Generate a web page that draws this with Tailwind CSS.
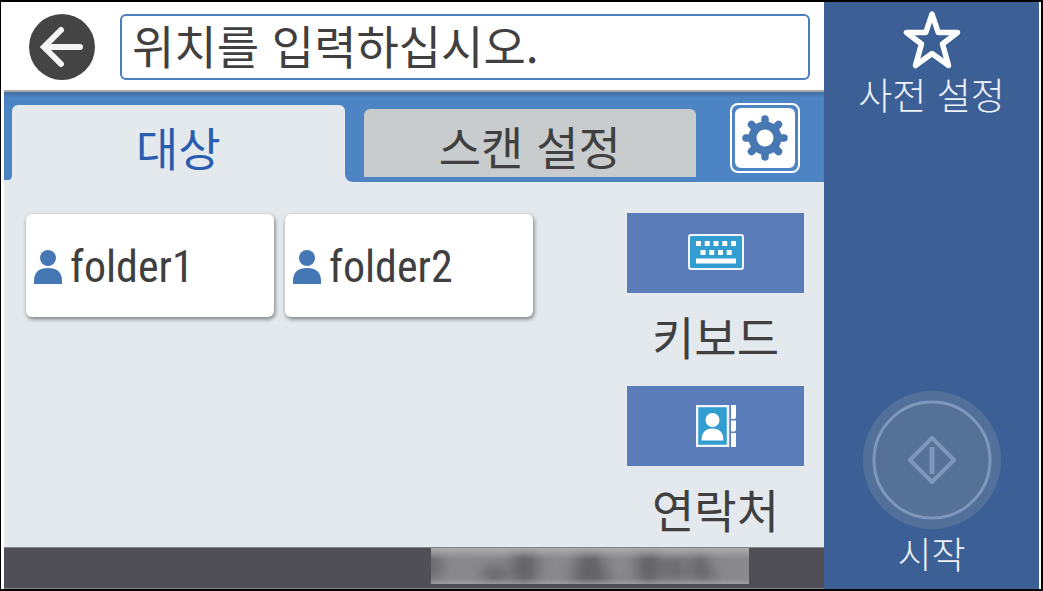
<!DOCTYPE html>
<html lang="ko">
  <head>
    <meta charset="UTF-8" />
    <meta name="viewport" content="width=device-width, initial-scale=1.0" />
    <script src="https://cdn.jsdelivr.net/npm/@tailwindcss/browser@4"></script>
    <title>스캔</title>
  </head>
  <body class="w-full h-screen flex overflow-hidden bg-white border-t-2 border-l border-r-2 border-b-2 border-black pl-[3px] pr-0.5 font-['Noto_Sans_CJK_KR',sans-serif] text-[46px] leading-[56px] text-[#404040]">
    <main class="flex-1 min-w-0 flex flex-col">
      <!-- Location -->
      <header class="flex items-center gap-6 pl-6 pr-3.5 pt-3 pb-2.5 border-b-2 border-[#a9aaa8]">
        <button aria-label="뒤로" class="shrink-0">
          <svg class="w-[68px] h-[66px]" viewBox="0 0 68 66" fill="none">
            <circle cx="34" cy="33" r="33" fill="#444444" />
            <path d="M33 16L16 33l17 17M18 33h34" stroke="#f4f4f4" stroke-width="6" stroke-linecap="round" />
          </svg>
        </button>
        <input type="text" aria-label="위치" value="위치를 입력하십시오." class="flex-1 min-w-0 h-[66px] px-2.5 pb-1.5 bg-white border-2 border-[#4a7ebd] rounded-md" />
      </header>

      <!-- Tabs -->
      <nav class="flex items-start bg-[#4c84c4] shadow-[inset_0_4px_3px_-1px_#446fa3] pl-2 pr-6 h-[90px] shrink-0">
        <div class="relative flex-1 self-end h-[77px]">
          <button class="w-full h-full pt-1 bg-[#e4e9ee] text-[#2a5caf] rounded-t-md">대상</button>
          <!-- rounded feet of the tab -->
          <svg class="absolute right-full bottom-0 w-2 h-2" viewBox="0 0 8 8" fill="#e4e9ee">
            <path d="M0 6h4q4 0 4-5v7H0z" />
          </svg>
          <svg class="absolute left-full bottom-0 w-2 h-2" viewBox="0 0 8 8" fill="#e4e9ee">
            <path d="M0 0q0 7 8 8H0z" />
          </svg>
        </div>
        <button class="flex-1 mt-[17px] ml-[19px] h-[68px] pt-1 bg-[#c9cccc] rounded-t-md">스캔 설정</button>
        <button aria-label="설정" class="mt-[11px] ml-[34px] w-[70px] h-[70px] p-[3px] border-2 border-white rounded-lg shrink-0">
          <span class="flex items-center justify-center w-full h-full bg-white rounded-md">
            <svg class="w-[46px] h-[46px]" viewBox="-23 -23 46 46" stroke="#4878b4">
              <path d="M0-19V19M-19 0H19M-13.5-13.5L13.5 13.5M-13.5 13.5L13.5-13.5" stroke-width="7.5" stroke-linecap="round" />
              <circle r="12.5" fill="white" stroke-width="8" />
            </svg>
          </span>
        </button>
      </nav>

      <!-- Destinations -->
      <section class="flex-1 min-h-0 flex justify-between bg-[#e4e9ee] pt-[31px] pl-[22px] pr-5">
        <div class="flex items-start gap-[11px] pt-px font-['Roboto_Condensed','Liberation_Sans',sans-serif] text-[44px]">
          <button class="flex items-center gap-2 w-[248px] h-[103px] pl-2 pt-0.5 bg-white rounded-md shadow-[1px_2px_4px_#777]">
            <svg class="w-[28px] h-[34px] shrink-0" viewBox="0 0 28 34" fill="#4677b5">
              <circle cx="14" cy="8" r="8" />
              <path d="M0 34v-3C0 22 5 18 14 18s14 4 14 13v3z" />
            </svg>
            folder1
          </button>
          <button class="flex items-center gap-2 w-[248px] h-[103px] pl-2 pt-0.5 bg-white rounded-md shadow-[1px_2px_4px_#777]">
            <svg class="w-[28px] h-[34px] shrink-0" viewBox="0 0 28 34" fill="#4677b5">
              <circle cx="14" cy="8" r="8" />
              <path d="M0 34v-3C0 22 5 18 14 18s14 4 14 13v3z" />
            </svg>
            folder2
          </button>
        </div>

        <div class="flex flex-col gap-2 w-[177px]">
          <button class="flex flex-col items-center">
            <span class="flex items-center justify-center w-full h-20 pb-0.5 bg-[#5a7cb9]">
              <svg class="w-[56px] h-[36px]" viewBox="0 0 56 36">
                <rect x="1" y="1" width="54" height="34" rx="2" fill="#329dd1" stroke="#f2f6fa" stroke-width="2" />
                <path d="M8 9.5h40" stroke="white" stroke-width="5" stroke-dasharray="5 3.75" />
                <path d="M12.5 18.5h31.500" stroke="white" stroke-width="5" stroke-dasharray="5 3.75" />
                <path d="M8 27h40" stroke="white" stroke-width="5" />
              </svg>
            </span>
            <span class="pt-3.5 h-[85px]">키보드</span>
          </button>
          <button class="flex flex-col items-center">
            <span class="flex items-center justify-center w-full h-20 bg-[#5a7cb9]">
              <svg class="w-[40px] h-[42px]" viewBox="0 0 40 42">
                <rect x="1" y="1" width="31" height="40" fill="#329dd1" stroke="#f2f6fa" stroke-width="2.5" />
                <circle cx="16.500" cy="15" r="7" fill="white" />
                <path d="M5.500 35.500c0-8 4-12 11-12s11 4 11 12z" fill="white" />
                <path d="M35 0h5v12l-1 2h-4zM35 15.500h5v9l-1 2h-4zM35 28h5v14h-5z" fill="white" />
              </svg>
            </span>
            <span class="pt-3.5">연락처</span>
          </button>
        </div>
      </section>

      <!-- Status bar -->
      <footer class="flex items-start justify-end h-[42px] shrink-0 bg-[#504f58] border-y border-[#85858a] pr-[75px]">
        <svg class="w-[318px] h-[36px] bg-[#8a8a8d]" viewBox="0 0 318 36" preserveAspectRatio="none" aria-hidden="true">
          <defs>
            <filter id="soft" filterUnits="userSpaceOnUse" x="-30" y="-30" width="380" height="100"><feGaussianBlur stdDeviation="8 6" /></filter>
            <linearGradient id="fade" x1="0" y1="0" x2="0" y2="1">
              <stop offset="0" stop-color="#bbbbbd" stop-opacity="0.7" />
              <stop offset="0.3" stop-color="#bbbbbd" stop-opacity="0" />
              <stop offset="0.85" stop-color="#bbbbbd" stop-opacity="0" />
              <stop offset="1" stop-color="#bbbbbd" stop-opacity="0.4" />
            </linearGradient>
          </defs>
          <g filter="url(#soft)" fill="#606064">
            <ellipse cx="0" cy="18" rx="9" ry="14" />
            <ellipse cx="64" cy="26" rx="12" ry="8" />
            <ellipse cx="94" cy="19" rx="12" ry="20" />
            <path d="M150 2h16l14 34h-40z" />
            <ellipse cx="218" cy="19" rx="12" ry="19" />
            <ellipse cx="244" cy="21" rx="8" ry="13" />
            <path d="M262 4h10l12 28h-24z" />
          </g>
          <rect width="318" height="36" fill="url(#fade)" />
        </svg>
      </footer>
    </main>

    <aside class="flex flex-col items-center justify-between w-[215px] shrink-0 bg-[#3c6096] pt-1.5 pb-3 text-[37px] leading-[48px] font-light text-[#eef2f8]">
      <button class="flex flex-col items-center">
        <svg class="w-[58px] h-[62px]" viewBox="0 0 58 62" fill="none">
          <path d="M29 6l6.200 18.500H54.500L39.500 36l6 21.500-16.500-12-16.500 12 6-21.500L3.500 24.500h19.300z" stroke="white" stroke-width="5.5" stroke-linejoin="round" />
        </svg>
        <span>사전 설정</span>
      </button>
      <button class="flex flex-col items-center">
        <svg class="w-[138px] h-[138px]" viewBox="0 0 138 138" fill="none" stroke="#7f97bb">
          <circle cx="69" cy="69" r="69" fill="#53709a" stroke="none" />
          <circle cx="69" cy="69" r="58" fill="#557195" stroke-width="3" />
          <path d="M69 47l22 22-22 22-22-22z" stroke-width="4" stroke-linejoin="round" />
          <path d="M69 56v27" stroke-width="5" />
        </svg>
        <span>시작</span>
      </button>
    </aside>
  </body>
</html>
